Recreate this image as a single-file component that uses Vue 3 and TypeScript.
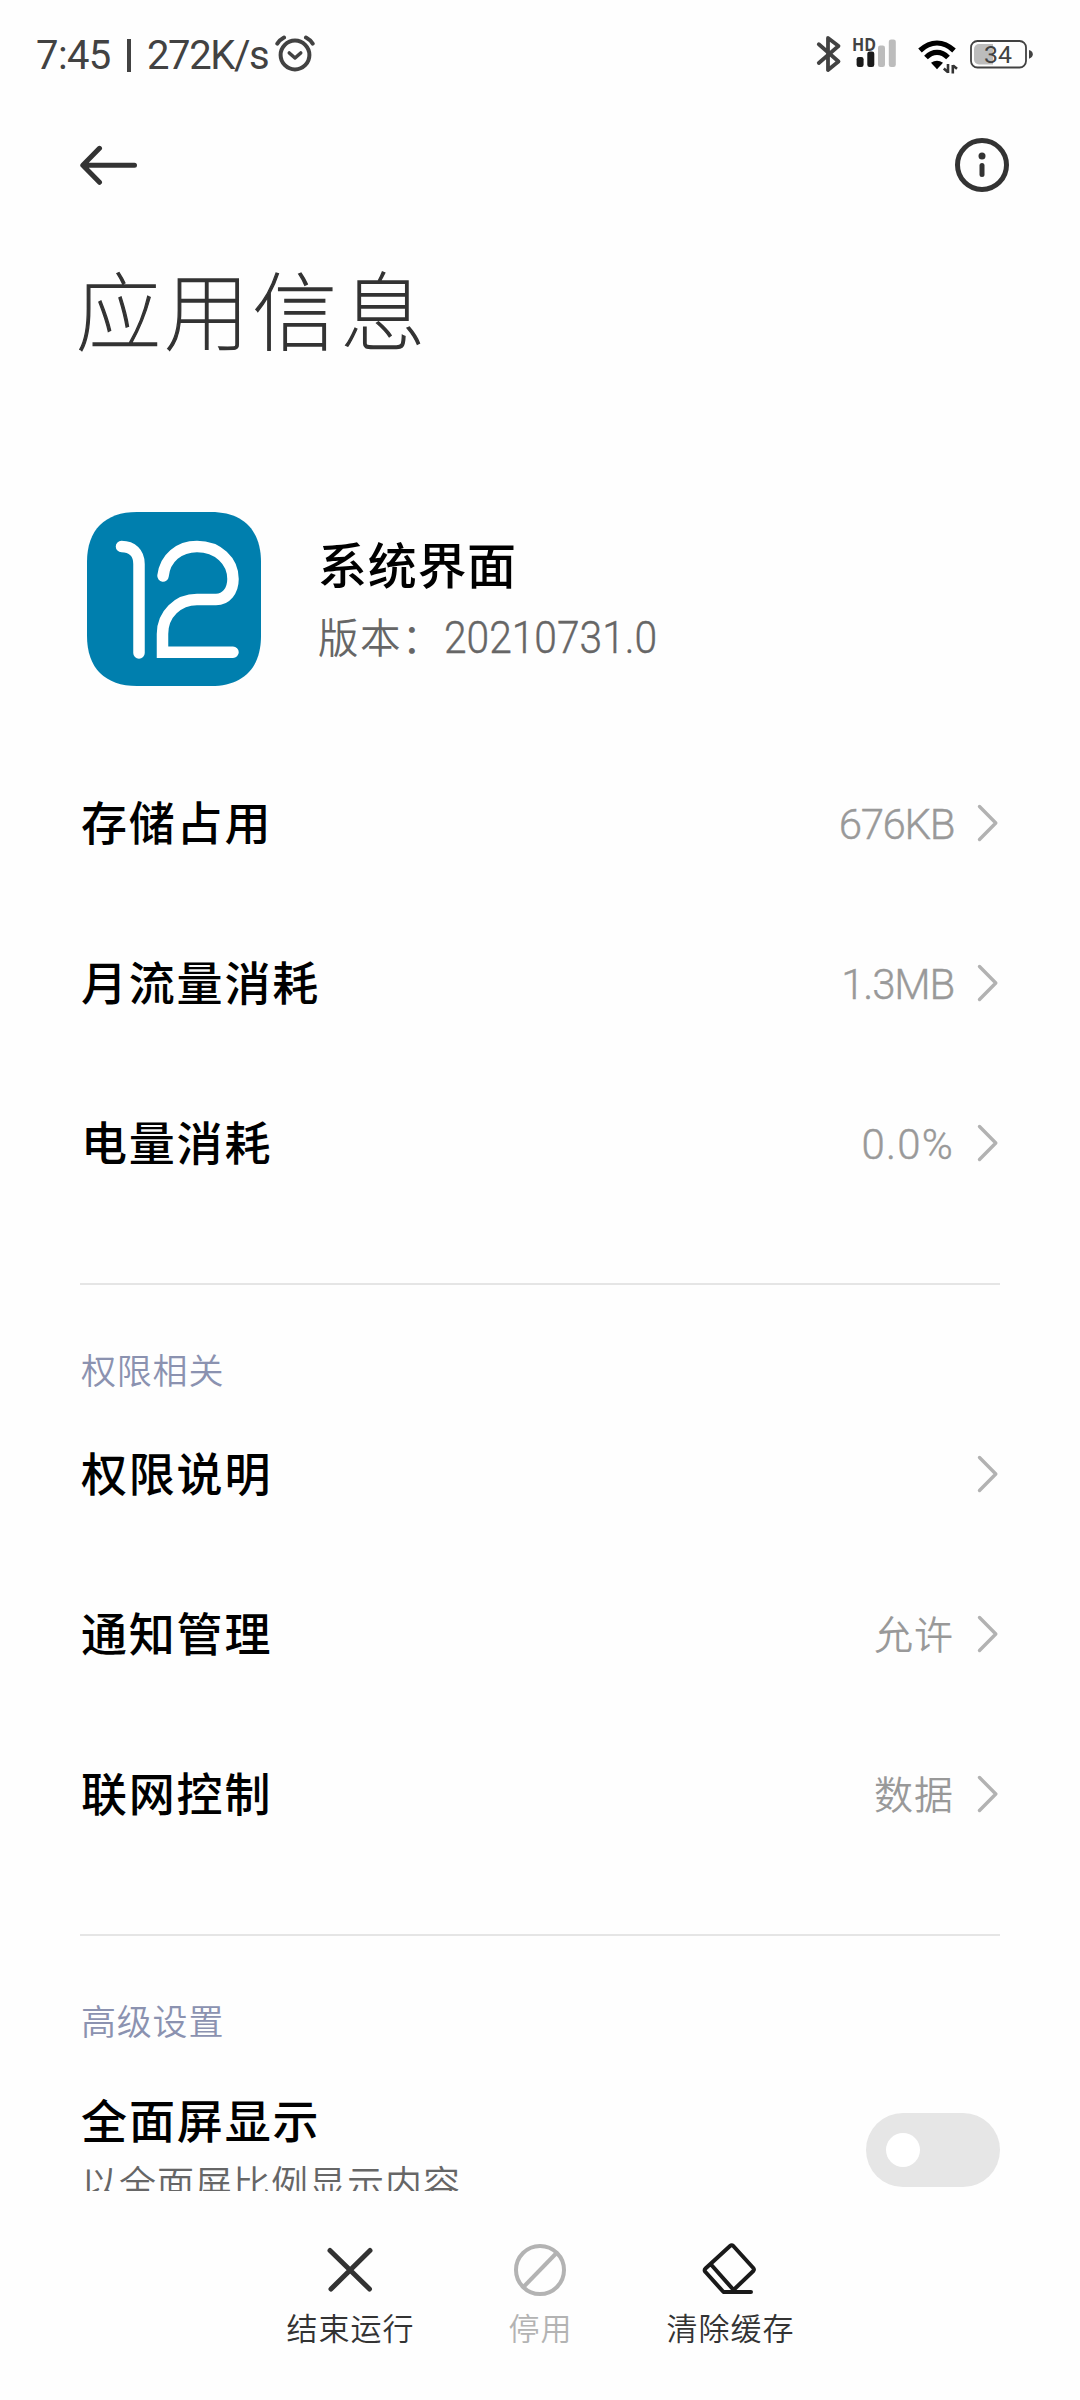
<script setup lang="ts">
interface Row {
  label: string
  value?: string
  tracking?: number
}

const usage: Row[] = [
  { label: '存储占用', value: '676KB', tracking: -1.4 },
  { label: '月流量消耗', value: '1.3MB', tracking: -1.2 },
  { label: '电量消耗', value: '0.0%', tracking: 1.2 },
]

const permissions: Row[] = [
  { label: '权限说明' },
  { label: '通知管理', value: '允许' },
  { label: '联网控制', value: '数据' },
]
</script>

<template>
  <div class="screen">
    <header class="status">
      <span class="time">7:45</span>
      <span class="bar"></span>
      <span class="speed">272K/s</span>
      <svg class="alarm" width="40" height="38" viewBox="0 0 40 38" fill="none" stroke="#424242" stroke-linecap="round">
        <circle cx="20" cy="20" r="14.4" stroke-width="4" />
        <path d="M14.3 18l5.7 5 5.7-5" stroke-width="3.6" stroke-linejoin="round" />
        <path d="M2.3 8.600Q5 4.600 9 2.500M37.700 8.600Q35 4.600 31 2.500" stroke-width="4" />
      </svg>
      <span class="spacer"></span>
      <svg class="bluetooth" width="26" height="40" viewBox="0 0 26 40" fill="none" stroke="#424242" stroke-width="3.8" stroke-linecap="round" stroke-linejoin="round">
        <path d="M2.800 10.300L22.500 27.500 12 36V4L22.500 12 2.800 29" />
      </svg>
      <svg class="signal" width="46" height="44" viewBox="0 -6 46 44">
        <text x="0" y="13.500" class="hd" textLength="24" lengthAdjust="spacingAndGlyphs">HD</text>
        <rect x="4.600" y="20" width="7" height="10" rx="2.300" fill="#1a1a1a" />
        <rect x="15.300" y="14.500" width="7" height="15.500" rx="2.300" fill="#1a1a1a" />
        <rect x="26" y="8.500" width="7" height="21.500" rx="2.300" fill="#bcbcbc" />
        <rect x="36.800" y="2.500" width="7" height="27.500" rx="2.300" fill="#bcbcbc" />
      </svg>
      <svg class="wifi" width="42" height="36" viewBox="0 0 42 36" fill="none" stroke="#000" stroke-width="5.2">
        <path d="M3 12.500Q11 5 20 5T37 12.500" />
        <path d="M9 19.500Q14 14.400 20 14.400T31 19.500" />
        <path d="M14 24.800Q20 20.500 26 24.800L20 31.200Z" fill="#000" stroke="none" />
        <path d="M31 26v9M26.800 30.500L31 34.200M35.800 35.500v-8.500M36 27.500l4 3.200" stroke="#333" stroke-width="2.6" />
      </svg>
      <svg class="battery" width="64" height="30" viewBox="0 0 64 30">
        <rect x="1" y="1" width="55" height="26.500" rx="6.500" fill="none" stroke="#424242" stroke-width="1.8" />
        <path d="M9 4h14v20.500H9a5 5 0 0 1-5-5V9a5 5 0 0 1 5-5z" fill="#bcbcbc" />
        <path d="M59 10c3 .8 3.800 2.500 3.800 4.300s-.8 3.500-3.800 4.400z" fill="#424242" />
        <text x="14" y="23" class="level" textLength="28" lengthAdjust="spacingAndGlyphs">34</text>
      </svg>
    </header>

    <nav class="toolbar">
      <svg width="60" height="42" viewBox="0 0 60 42" fill="none" stroke="#333" stroke-width="5" stroke-linecap="round" stroke-linejoin="round">
        <path d="M54.500 21.300H3M19.500 4.300L2.800 21.300l16.700 17" />
      </svg>
      <svg width="56" height="56" viewBox="0 0 56 56" fill="none" stroke="#333" stroke-width="5">
        <circle cx="28" cy="28" r="24.500" />
        <path d="M28 28.500v9" stroke-linecap="round" />
        <circle cx="28" cy="19" r="3.500" fill="#333" stroke="none" />
      </svg>
    </nav>

    <h1 class="title">应用信息</h1>

    <section class="app">
      <svg class="logo" width="174" height="174" viewBox="0 0 174 174">
        <path d="M50 0H124C156 0 174 18 174 50V124C174 156 156 174 124 174H50C18 174 0 156 0 124V50C0 18 18 0 50 0Z" fill="#007fae" />
        <g fill="none" stroke="#fff" stroke-width="11.5" stroke-linecap="round">
          <path d="M34.500 34.500C45 34.500 52 41 52 52V141" />
          <path d="M76 64C78 46 92 34.500 110 34.500C131 34.500 146 49 146 67C146 79 139 87.500 129 87.500H110C91 87.500 75.500 102 75.500 122V140.300H146" />
        </g>
      </svg>
      <div class="about">
        <div class="name">系统界面</div>
        <div class="version"><span>版本：</span><span class="number">20210731.0</span></div>
      </div>
    </section>

    <main class="list">
      <div v-for="row in usage" :key="row.label" class="row">
        <span class="label">{{ row.label }}</span>
        <span class="value latin" :style="{ letterSpacing: row.tracking + 'px' }">{{ row.value }}</span>
        <svg class="chevron" width="22" height="38" viewBox="0 0 22 38"><path d="M2.500 2.500L18.800 19 2.500 35.500" /></svg>
      </div>
      <hr class="divider" />
      <h2 class="heading">权限相关</h2>
      <div v-for="row in permissions" :key="row.label" class="row">
        <span class="label">{{ row.label }}</span>
        <span v-if="row.value" class="value">{{ row.value }}</span>
        <svg class="chevron" width="22" height="38" viewBox="0 0 22 38"><path d="M2.500 2.500L18.800 19 2.500 35.500" /></svg>
      </div>
      <hr class="divider" />
      <h2 class="heading">高级设置</h2>
      <div class="option">
        <div>
          <div class="caption">全面屏显示</div>
          <div class="hint">以全面屏比例显示内容</div>
        </div>
        <span class="switch"><span class="knob"></span></span>
      </div>
    </main>

    <footer class="actions">
      <div class="action">
        <svg width="60" height="60" viewBox="0 0 60 60" fill="none" stroke="#333" stroke-width="5" stroke-linecap="round">
          <path d="M10 10.500L49.500 49M50 10.500L11 49" />
        </svg>
        <span>结束运行</span>
      </div>
      <div class="action disabled">
        <svg width="60" height="60" viewBox="0 0 60 60" fill="none" stroke="#b3b3b3" stroke-width="4">
          <circle cx="30" cy="30" r="24" />
          <path d="M46.500 13L13.500 47" />
        </svg>
        <span>停用</span>
      </div>
      <div class="action">
        <svg width="60" height="60" viewBox="0 0 60 60" fill="none" stroke="#1a1a1a" stroke-width="4" stroke-linecap="round" stroke-linejoin="round">
          <path d="M33.500 50L53.300 31Q54.500 29.500 53.300 28L33.300 6Q31.700 4.500 30 6L5.500 28.500Q3.700 30.200 5.500 32L23.500 52H51M11 24.500L34.500 51" />
        </svg>
        <span>清除缓存</span>
      </div>
    </footer>
  </div>
</template>

<style>
body {
  background: #fefefe;
}
</style>

<style scoped>
.screen {
  width: 1080px;
  height: 2400px;
  box-sizing: border-box;
  overflow: hidden;
  display: flex;
  flex-direction: column;
  background: #fefefe;
  font-family: 'Noto Sans CJK SC', sans-serif;
  color: #000;
}

.status {
  flex: none;
  height: 110px;
  padding: 0 46px 0 36px;
  display: flex;
  align-items: center;
  color: #424242;
  font-family: Roboto, sans-serif;
  font-size: 40px;
}

.time {
  width: 75px;
  letter-spacing: -0.6px;
}

.bar {
  width: 4px;
  height: 33px;
  margin: 0 16px 0 16px;
  background: #424242;
}

.speed {
  width: 126px;
  letter-spacing: -1.4px;
}

.alarm {
  margin: -3px 0 0 2px;
}

.spacer {
  flex: 1;
}

.bluetooth {
  margin: -2px 10px 0 0;
}

.signal {
  margin: -4px 19px 0 0;
}

.wifi {
  margin: 1px 11px 0 0;
}

.hd {
  font: 700 17.5px 'Open Sans', sans-serif;
  fill: #424242;
}

.level {
  font: 400 24px Roboto, sans-serif;
  fill: #424242;
}

.toolbar {
  flex: none;
  height: 110px;
  padding: 0 70px 0 80px;
  display: flex;
  align-items: center;
  justify-content: space-between;
}

.title {
  flex: none;
  margin: 37px 0 0 76px;
  height: 100px;
  line-height: 100px;
  font-size: 85px;
  font-weight: 100;
  letter-spacing: 3.2px;
  color: #333;
  -webkit-text-stroke: 1.3px #333;
}

.app {
  flex: none;
  height: 174px;
  margin: 155px 0 0 87px;
  display: flex;
  align-items: center;
}

.about {
  margin-left: 57px;
}

.name {
  font-size: 49px;
  line-height: 68px;
  letter-spacing: 0.7px;
  font-weight: 500;
}

.version {
  display: flex;
  align-items: center;
  height: 72px;
  padding-top: 5px;
  box-sizing: border-box;
  font-size: 40.5px;
  letter-spacing: 1.4px;
  font-weight: 350;
  color: #666;
}

.number {
  margin-top: 3px;
  font-family: Roboto, sans-serif;
  font-size: 45px;
  font-weight: 300;
  letter-spacing: 0;
  transform: scaleX(0.905);
  transform-origin: left center;
  -webkit-text-stroke: 0.4px #666;
}

.list {
  flex: none;
  height: 1448px;
  margin-top: 57px;
  padding: 0 80px;
  overflow: hidden;
}

.row {
  height: 160px;
  display: flex;
  align-items: center;
}

.label {
  flex: 1;
  margin: -7px 0 0 1px;
  font-size: 46px;
  line-height: 60px;
  letter-spacing: 1.8px;
  font-weight: 500;
}

.caption {
  margin-left: 1px;
  font-size: 46px;
  line-height: 60px;
  letter-spacing: 1.9px;
  font-weight: 500;
}

.value {
  margin-top: -4px;
  font-size: 39px;
  font-weight: 350;
  letter-spacing: 1px;
  color: #999;
}

.value.latin {
  margin-top: 3px;
  font-family: Roboto, sans-serif;
  font-size: 42px;
  font-weight: 300;
  -webkit-text-stroke: 0.4px #999;
}

.chevron {
  margin: 0 1px 0 23px;
  fill: none;
  stroke: #b2b2b2;
  stroke-width: 3.4;
  stroke-linecap: round;
  stroke-linejoin: round;
}

.divider {
  height: 2px;
  margin: 60px 0 0;
  border: 0;
  background: #e5e5e5;
}

.heading {
  height: 109px;
  margin: 0 0 0 1px;
  padding-top: 58px;
  box-sizing: border-box;
  line-height: 52px;
  font-size: 35px;
  font-weight: 350;
  letter-spacing: 0.8px;
  color: #8b92b0;
}

.option {
  display: flex;
  justify-content: space-between;
  padding-top: 43px;
}

.hint {
  margin: 4px 0 0 1px;
  font-size: 37px;
  line-height: 60px;
  letter-spacing: 1px;
  font-weight: 350;
  color: #666;
}

.switch {
  width: 134px;
  height: 74px;
  margin-top: 25px;
  padding-left: 20px;
  box-sizing: border-box;
  display: flex;
  align-items: center;
  border-radius: 37px;
  background: #e6e6e6;
}

.knob {
  width: 34px;
  height: 34px;
  border-radius: 50%;
  background: #fff;
}

.actions {
  flex: none;
  height: 209px;
  padding-top: 49px;
  box-sizing: border-box;
  display: flex;
  justify-content: center;
}

.action {
  width: 190px;
  display: flex;
  flex-direction: column;
  align-items: center;
  font-size: 31px;
  line-height: 50px;
  letter-spacing: 1px;
  font-weight: 350;
  color: #333;
}

.action span {
  margin: 2px 0 0 1px;
}

.disabled {
  color: #b3b3b3;
}
</style>
